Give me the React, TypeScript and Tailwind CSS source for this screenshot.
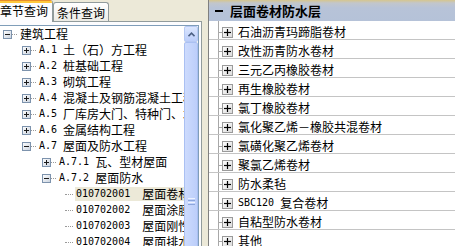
import React from "react";

type Node = { lvl: number; box?: "plus" | "minus"; mono?: string; text: string; selected?: boolean };

const tree: Node[] = [
  { lvl: 0, box: "minus", text: "建筑工程" },
  { lvl: 1, box: "plus", mono: "A.1\u00a0", text: "土（石）方工程" },
  { lvl: 1, box: "plus", mono: "A.2\u00a0", text: "桩基础工程" },
  { lvl: 1, box: "plus", mono: "A.3\u00a0", text: "砌筑工程" },
  { lvl: 1, box: "plus", mono: "A.4\u00a0", text: "混凝土及钢筋混凝土工程" },
  { lvl: 1, box: "plus", mono: "A.5\u00a0", text: "厂库房大门、特种门、木结构工程" },
  { lvl: 1, box: "plus", mono: "A.6\u00a0", text: "金属结构工程" },
  { lvl: 1, box: "minus", mono: "A.7\u00a0", text: "屋面及防水工程" },
  { lvl: 2, box: "plus", mono: "A.7.1\u00a0", text: "瓦、型材屋面" },
  { lvl: 2, box: "minus", mono: "A.7.2\u00a0", text: "屋面防水" },
  { lvl: 3, mono: "010702001\u00a0\u00a0", text: "屋面卷材防水", selected: true },
  { lvl: 3, mono: "010702002\u00a0\u00a0", text: "屋面涂膜防水" },
  { lvl: 3, mono: "010702003\u00a0\u00a0", text: "屋面刚性防水" },
  { lvl: 3, mono: "010702004\u00a0\u00a0", text: "屋面排水管" },
];

const items: { mono?: string; text: string }[] = [
  { text: "石油沥青玛蹄脂卷材" },
  { text: "改性沥青防水卷材" },
  { text: "三元乙丙橡胶卷材" },
  { text: "再生橡胶卷材" },
  { text: "氯丁橡胶卷材" },
  { text: "氯化聚乙烯－橡胶共混卷材" },
  { text: "氯磺化聚乙烯卷材" },
  { text: "聚氯乙烯卷材" },
  { text: "防水柔毡" },
  { mono: "SBC120\u00a0", text: "复合卷材" },
  { text: "自粘型防水卷材" },
  { text: "其他" },
];

const padByLvl = ["pl-[3px]", "pl-[22px]", "pl-[42px]", "pl-[61px]"];

function TreeBox({ kind }: { kind: "plus" | "minus" }) {
  return (
    <svg width="9" height="9" viewBox="0 0 9 9" className="block shrink-0">
      <defs>
        <linearGradient id="tb" x1="0" y1="0" x2="1" y2="1">
          <stop offset="0" stopColor="#ffffff" />
          <stop offset="1" stopColor="#c9d2de" />
        </linearGradient>
      </defs>
      <rect x="0.5" y="0.5" width="8" height="8" fill="url(#tb)" stroke="#7d93ad" />
      <line x1="2" y1="4.5" x2="7" y2="4.5" stroke="#1a1a1a" />
      {kind === "plus" && <line x1="4.5" y1="2" x2="4.5" y2="7" stroke="#1a1a1a" />}
    </svg>
  );
}

function ListBox() {
  return (
    <svg width="11" height="11" viewBox="0 0 11 11" className="block shrink-0">
      <defs>
        <linearGradient id="lb" x1="0" y1="0" x2="1" y2="1">
          <stop offset="0" stopColor="#ffffff" />
          <stop offset="1" stopColor="#dadada" />
        </linearGradient>
      </defs>
      <rect x="0.5" y="0.5" width="10" height="10" fill="url(#lb)" stroke="#9a9a9a" />
      <line x1="2" y1="5.5" x2="9" y2="5.5" stroke="#000" strokeWidth="1.2" />
      <line x1="5.5" y1="2" x2="5.5" y2="9" stroke="#000" strokeWidth="1.2" />
    </svg>
  );
}

function TreeRow({ n }: { n: Node }) {
  return (
    <div className={`flex h-[16px] shrink-0 items-center overflow-hidden whitespace-nowrap ${padByLvl[n.lvl]}`}>
      {n.box ? (
        <>
          <TreeBox kind={n.box} />
          <span className="mr-[2px] w-[5px] shrink-0 border-t border-dotted border-[#9a9a9a]" />
        </>
      ) : (
        <span className="ml-[4px] mr-[2px] w-[8px] shrink-0 border-t border-dotted border-[#9a9a9a]" />
      )}
      <span
        className={`flex h-[14px] shrink-0 items-center leading-[14px] ${
          n.selected ? "bg-[#ece9d8] pl-[1px] pr-[2px]" : "pl-[1px]"
        }`}
      >
        {n.mono && <span className="shrink-0 font-['DejaVu_Sans_Mono',monospace] text-[10px]">{n.mono}</span>}
        <span className="shrink-0">{n.text}</span>
      </span>
    </div>
  );
}

function Scrollbar() {
  return (
    <div className="flex w-[14px] shrink-0 flex-col bg-[#f7f6f1]">
      <div className="flex h-[16px] shrink-0 items-center justify-center rounded-[2px] border border-[#b6c9f3] bg-gradient-to-b from-[#dbe6fe] to-[#bccefa]">
        <svg width="7" height="5" viewBox="0 0 7 5" className="block">
          <path d="M0.5 4.2 L3.5 1.2 L6.5 4.2" fill="none" stroke="#4d6185" strokeWidth="1.6" />
        </svg>
      </div>
      <div className="flex flex-1 flex-col items-center rounded-[2px] border border-[#aac0f2] bg-gradient-to-r from-[#cddbfd] to-[#bccefa] pt-[155px]">
        <div className="flex w-[7px] flex-col gap-[1px]">
          <div className="h-px bg-[#eef3ff]" />
          <div className="h-px bg-[#8ca6dc]" />
          <div className="h-px bg-[#eef3ff]" />
          <div className="h-px bg-[#8ca6dc]" />
        </div>
      </div>
    </div>
  );
}

export default function App() {
  return (
    <div className="flex h-[246px] w-[455px] overflow-hidden bg-[#ece9d8] font-['Noto_Sans_CJK_SC',sans-serif] text-[12px] text-black">
      {/* left column */}
      <div className="flex h-full w-[202px] shrink-0 flex-col">
        <div className="flex h-[21px] shrink-0 items-end">
          <div className="relative z-10 -mb-px -ml-[5px] flex h-[22px] w-[58px] shrink-0 flex-col overflow-hidden rounded-t-[3px] border-x border-[#919b9c] bg-[#fcfcfe]">
            <div className="h-[1px] bg-[#e68b2c]" />
            <div className="h-[2px] bg-[#ffc83c]" />
            <div className="flex flex-1 items-center justify-center pb-[3px] leading-none">章节查询</div>
          </div>
          <div className="flex h-[19px] w-[56px] shrink-0 items-center justify-center rounded-t-[3px] border border-b-0 border-[#919b9c] bg-gradient-to-b from-[#ffffff] to-[#ecebe5] pt-[2px] leading-none">
            条件查询
          </div>
        </div>
        <div className="flex flex-1 flex-col border-r border-t border-[#919b9c] bg-[#fcfcfe] pr-[2px] pt-[3px]">
          <div className="flex flex-1 overflow-hidden border-r border-t border-[#7f9db9] bg-white">
            <div className="flex min-w-0 flex-1 flex-col overflow-hidden">
              {tree.map((n, i) => (
                <TreeRow key={i} n={n} />
              ))}
            </div>
            <Scrollbar />
          </div>
        </div>
      </div>

      {/* right panel */}
      <div className="ml-[6px] flex flex-1 flex-col overflow-hidden border-l border-[#7f7f7f] bg-white">
        <div className="flex h-[21px] shrink-0 items-center bg-[linear-gradient(to_bottom,#d6c68e_0px,#c2c6cc_3px,#b7c3d8_8px,#b5c2d8_100%)]">
          <span className="ml-[6px] h-[2px] w-[8px] bg-black" />
          <span className="ml-[7px] text-[13px] font-bold leading-none">层面卷材防水层</span>
        </div>
        {items.map((it, i) => (
          <div key={i} className="flex h-[19px] shrink-0 border-b border-[#c4c4c4]">
            <div className="h-full w-[10px] shrink-0 border-r border-[#a8a8a8]" />
            <div className="flex flex-1 items-center whitespace-nowrap pt-[4px]">
              <span className="h-px w-[3px] bg-[#a8a8a8]" />
              <ListBox />
              <span className="ml-[5px] flex items-center leading-none">
                {it.mono && <span className="font-['DejaVu_Sans_Mono',monospace] text-[10px]">{it.mono}</span>}
                <span>{it.text}</span>
              </span>
            </div>
          </div>
        ))}
      </div>
    </div>
  );
}
